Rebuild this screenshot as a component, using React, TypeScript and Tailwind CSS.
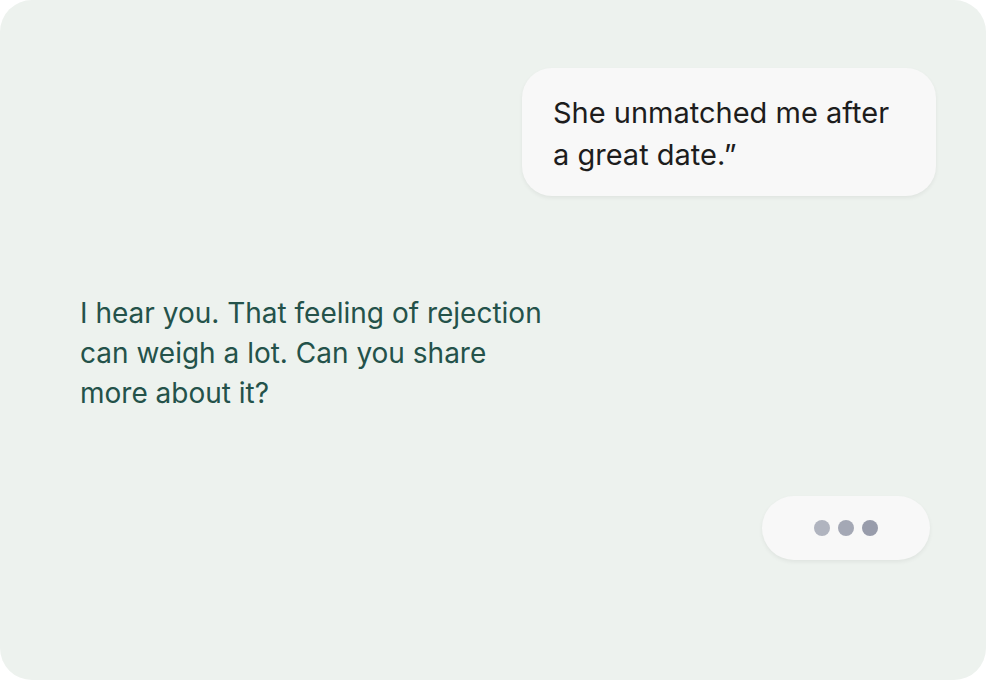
export default function App() {
  return (
    <div className="w-[986px] h-[680px] bg-white">
      <div className="h-full rounded-[32px] bg-[#edf2ee] flex flex-col px-[50px] pt-[68px] font-['Inter',sans-serif]">
        {/* outgoing message */}
        <div className="self-end w-[414px] h-[128px] rounded-[30px] bg-[#f8f8f8] shadow-[0_2px_4px_rgba(0,0,0,0.06)] pl-[31px] pt-[24px] text-[29px] leading-[42px] text-[#1d1d1d]">
          She unmatched me after
          <br />
          a great date.”
        </div>

        {/* reply */}
        <p className="mt-[97px] ml-[30px] text-[28px] leading-[40px] text-[#24524a]">
          I hear you. That feeling of rejection
          <br />
          can weigh a lot. Can you share
          <br />
          more about it?
        </p>

        {/* typing indicator */}
        <div className="self-end mt-[83px] mr-[6px] w-[168px] h-[64px] rounded-full bg-[#f8f8f8] shadow-[0_2px_4px_rgba(0,0,0,0.06)] flex items-center justify-center gap-2">
          <span className="w-4 h-4 rounded-full bg-[#b0b4bf]" />
          <span className="w-4 h-4 rounded-full bg-[#a4a8b5]" />
          <span className="w-4 h-4 rounded-full bg-[#989cab]" />
        </div>
      </div>
    </div>
  )
}
